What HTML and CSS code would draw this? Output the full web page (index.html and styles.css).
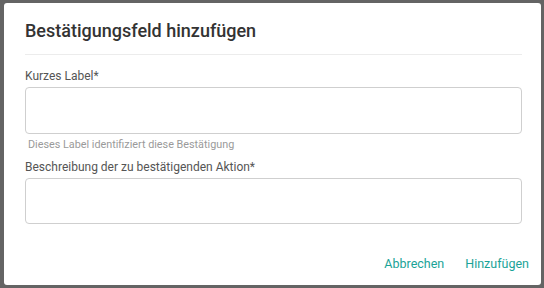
FILE: index.html
```html
<!DOCTYPE html>
<html lang="de">
<head>
<meta charset="utf-8">
<link rel="stylesheet" href="styles.css">
</head>
<body>
<div class="dialog">
  <h2 class="title">Bestätigungsfeld hinzufügen</h2>
  <div class="divider"></div>
  <div class="field">
    <label class="label">Kurzes Label*</label>
    <div class="input"></div>
    <div class="hint">Dieses Label identifiziert diese Bestätigung</div>
  </div>
  <div class="field field2">
    <label class="label">Beschreibung der zu bestätigenden Aktion*</label>
    <div class="input input2"></div>
  </div>
  <div class="actions">
    <span class="btn">Abbrechen</span>
    <span class="btn">Hinzufügen</span>
  </div>
</div>
</body>
</html>
```
FILE: styles.css
```css
html, body {
  margin: 0;
  padding: 0;
  background: #646464;
  width: 544px;
  height: 288px;
  overflow: hidden;
  font-family: Roboto, "Liberation Sans", sans-serif;
}
body {
  padding: 3px 3px 0 4px;
  box-sizing: border-box;
}
.dialog {
  background: #fff;
  width: 537px;
  height: 282px;
  border-radius: 3px;
  box-sizing: border-box;
  padding: 16px 19px 0 21px;
  display: flex;
  flex-direction: column;
}
.title {
  margin: 0;
  font-size: 18px;
  line-height: 24px;
  font-weight: 500;
  color: #333;
}
.divider {
  height: 1px;
  background: #ececec;
  margin-top: 11px;
}
.field {
  display: flex;
  flex-direction: column;
  margin-top: 13px;
}
.field2 {
  margin-top: 7px;
}
.label {
  font-size: 12px;
  line-height: 16px;
  color: #555;
}
.input {
  margin-top: 3px;
  height: 47px;
  border: 1px solid #cfcfcf;
  border-radius: 4px;
  box-sizing: border-box;
}
.input2 {
  height: 46px;
}
.hint {
  font-size: 10.8px;
  line-height: 14px;
  color: #9a9a9a;
  margin-top: 4px;
  padding-left: 3px;
}
.actions {
  margin-top: auto;
  display: flex;
  justify-content: flex-end;
  gap: 21px;
  padding-bottom: 13px;
  margin-right: -7px;
}
.btn {
  font-size: 12.5px;
  line-height: 16px;
  color: #1aa397;
}
```
